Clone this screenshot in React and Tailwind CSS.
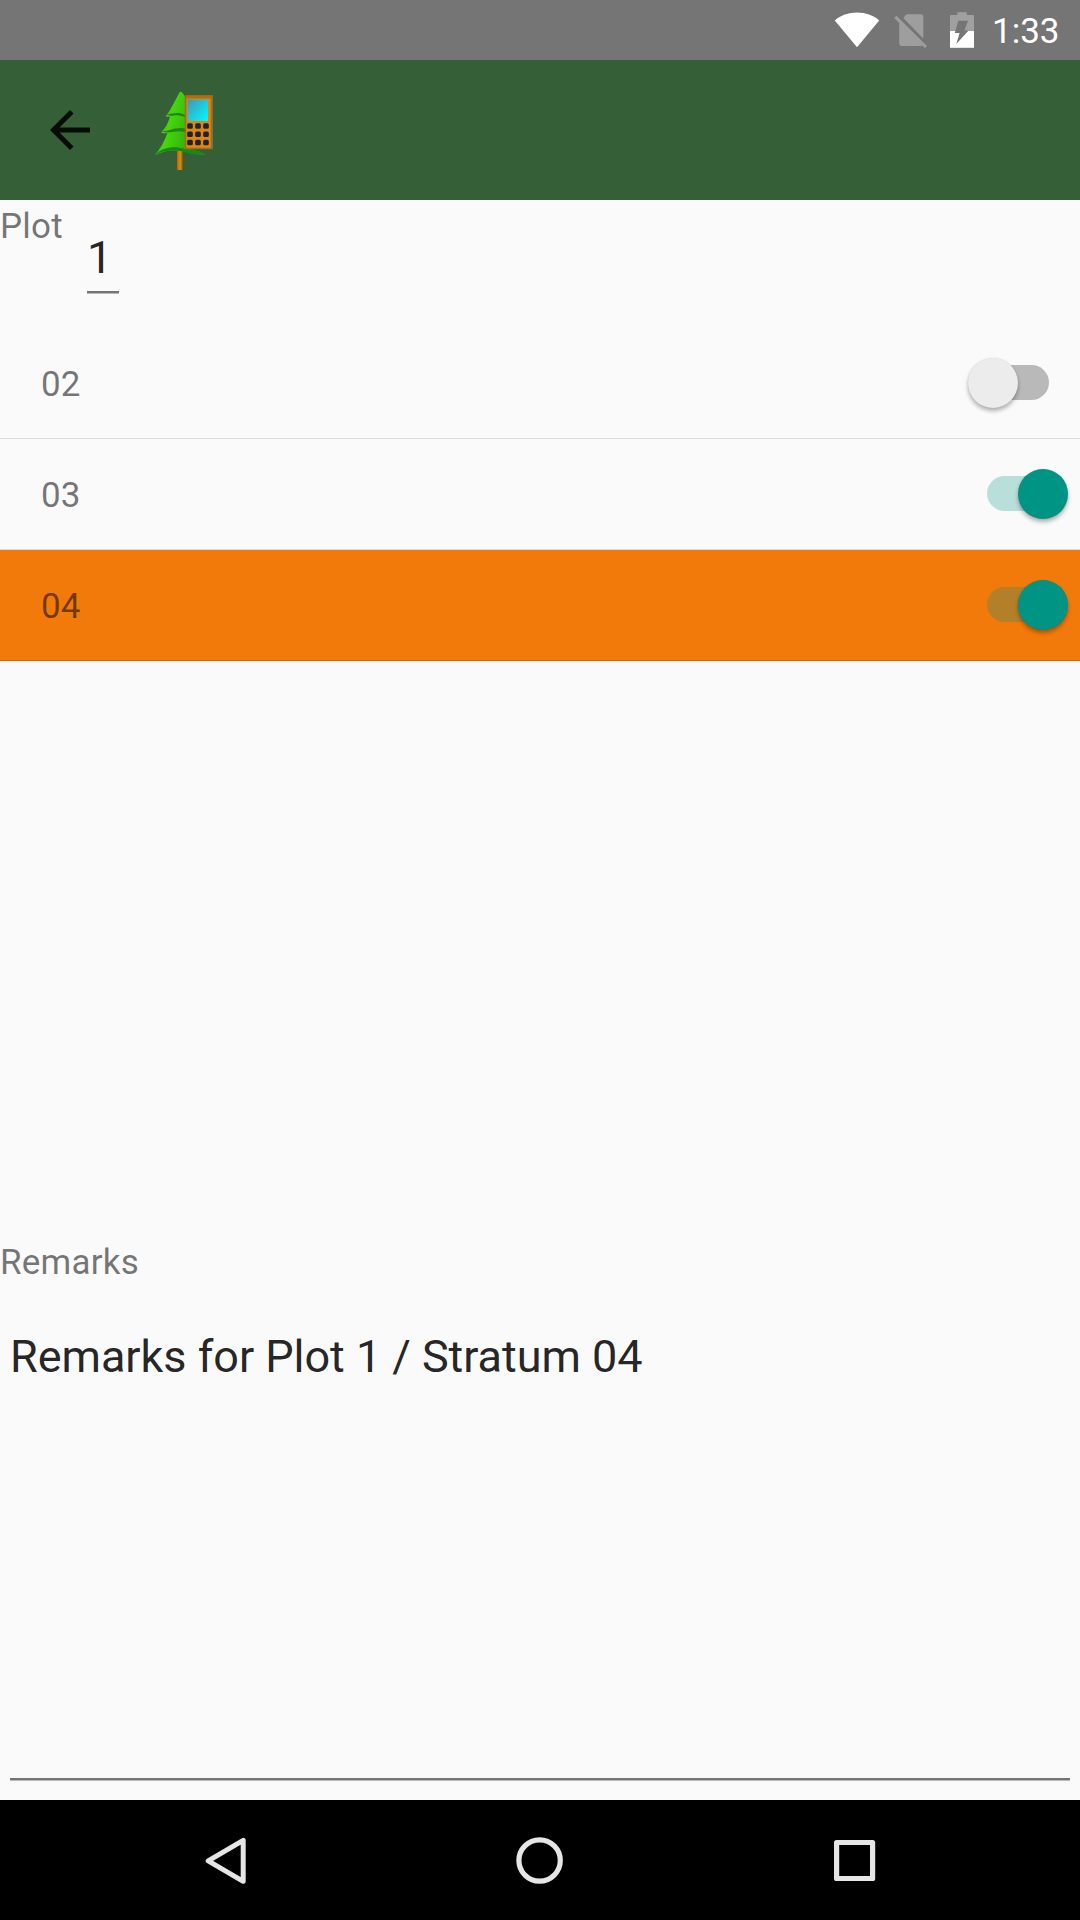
const strata = [
  { code: '02', on: false, selected: false },
  { code: '03', on: true, selected: false },
  { code: '04', on: true, selected: true },
];

function StatusBar() {
  return (
    <div className="flex h-[60px] shrink-0 bg-[#757575] pl-[834px] text-white">
      <svg className="h-[60px] w-[46px]" viewBox="0 0 46 60" fill="currentColor">
        <path d="M.8 20.4C6.5 15.3 14.500 12.500 23 12.500s16.500 2.800 22.200 7.900L23 47.300Z" />
      </svg>
      <svg className="ml-[11px] h-[60px] w-[37px]" viewBox="0 0 37 60" fill="#9e9e9e">
        <path d="M16.500 14.200H29.500a2.800 2.800 0 0 1 2.800 2.800V38.500L12.500 18.300l2-3a2.500 2.500 0 0 1 2-1.100Z" />
        <path d="M8.200 22.500 31.500 45.300a3 3 0 0 1-1.700.7H11.200a3 3 0 0 1-3-3Z" />
        <path d="M3.200 18 5.400 15.800 36 45.900 33.900 48.100Z" />
      </svg>
      <svg className="ml-[21px] h-[60px] w-[26px]" viewBox="0 0 26 60">
        <path d="M8.300 12.300h9.400V15H24a1 1 0 0 1 1 1v15H1V16a1 1 0 0 1 1-1h6.300Z" fill="#a0a0a0" />
        <path d="M1 31h24v16.800H1Z" fill="#fff" />
        <path d="M9.300 20.700H19l-3.600 9.800h4.200L7.300 44l3.300-11H5.800Z" fill="#757575" />
      </svg>
      <span className="ml-[17px] pt-[11px] text-[35px] leading-[42px]">1:33</span>
    </div>
  );
}

function TreePhoneLogo() {
  return (
    <svg className="ml-[50px] h-[84px] w-[66px] blur-[0.6px]" viewBox="150 88 66 84">
      <defs>
        <linearGradient id="leaf" x1="0" y1="0" x2="1" y2="0.3">
          <stop offset="0" stopColor="#2a9a0c" />
          <stop offset="0.4" stopColor="#46d60c" />
          <stop offset="1" stopColor="#2aa008" />
        </linearGradient>
        <linearGradient id="screen" x1="0" y1="0" x2="1" y2="1">
          <stop offset="0" stopColor="#4495b4" />
          <stop offset="1" stopColor="#00fbff" />
        </linearGradient>
        <linearGradient id="trunk" x1="0" y1="0" x2="1" y2="0">
          <stop offset="0" stopColor="#a86408" />
          <stop offset="0.5" stopColor="#dc920c" />
          <stop offset="1" stopColor="#5a4a14" />
        </linearGradient>
      </defs>
      <path d="M177 149h6.500v21H177Z" fill="url(#trunk)" />
      <path
        d="M180 91.500c2 0 4 3 5.500 6V149c8 .5 15 2 20 5.500-8 1-14-1-22-3-10-2-19-1-28.500 3.500 5-6 9-13 12.500-22-2 .5-4 .5-6.500-.5 4-4 7-9 9-16-1.500.5-3 .3-4.500 0 5-6 9-15 14.500-25Z"
        fill="url(#leaf)"
      />
      <path d="M166 114c7 0 12-3 19 1v2c-6-2-9-2-14-1Z" fill="#238510" />
      <path d="M161 131.500c9 0 14-5 24-3v3.500c-7-2-11 0-17 .5Z" fill="#238510" />
      <path d="M155 154.500c8-7 19-9 30-5.500 8 .5 15 2 20 5.500-8 1-14-1-22-3-10-2-19-1-28 3Z" fill="#178916" />
      <path d="M185.500 96h26v52.500h-26Z" fill="#e0850e" stroke="#a96918" strokeWidth="1.500" />
      <path d="M212.400 95v54" stroke="#7d7a4c" strokeWidth="0.900" />
      <path d="M186 95.500h25.500v3H186Z" fill="#b56b0c" />
      <path d="M187.500 99.500h20.500v21.500h-20.500Z" fill="url(#screen)" />
      <g fill="#1d2337">
        {[126, 134.3, 142.5].map((y) =>
          [190, 198, 206].map((x) => (
            <rect key={x + '-' + y} x={x - 2.8} y={y - 2.8} width="5.600" height="5.600" rx="1.500" />
          ))
        )}
      </g>
    </svg>
  );
}

function Toolbar() {
  return (
    <header className="flex h-[140px] shrink-0 items-center bg-[#355f36] pl-[40px]">
      <svg className="h-[60px] w-[60px]" viewBox="0 0 24 24" fillOpacity="0.87">
        <path d="M20 11H7.830l5.590-5.590L12 4l-8 8 8 8 1.410-1.410L7.830 13H20v-2z" />
      </svg>
      <TreePhoneLogo />
    </header>
  );
}

function Switch({ on }) {
  return (
    <div
      className={`mb-[1px] flex h-[35px] w-[62px] items-start rounded-full ${
        on ? 'justify-end bg-[#009485]/26' : 'bg-black/26'
      }`}
    >
      <div
        className={`-mt-[7px] size-[50px] shrink-0 rounded-full shadow-[0_3px_4px_rgba(0,0,0,0.3),0_0_1px_rgba(0,0,0,0.15)] ${
          on ? '-mr-[19px] bg-[#009485]' : '-ml-[19px] bg-[#ececec]'
        }`}
      />
    </div>
  );
}

function StratumRow({ code, on, selected }) {
  return (
    <li
      className={`flex h-[111px] items-center justify-between border-b border-black/12 pr-[31px] pl-[41px] ${
        selected ? 'bg-[#f27a0a]' : ''
      }`}
    >
      <span className="pt-[4px] text-[35px] leading-[42px] tracking-[0.2px] text-black/54">{code}</span>
      <Switch on={on} />
    </li>
  );
}

function Underline({ className }) {
  return <div className={`h-[3px] border-b border-[#b8b8b8] bg-[#757575] ${className}`} />;
}

function NavigationBar() {
  return (
    <nav className="flex h-[120px] shrink-0 items-center bg-black pl-[202px]">
      <svg className="h-[60px] w-[48px]" viewBox="0 0 48 60" fill="none" stroke="#e6e6e6" strokeWidth="5" strokeLinejoin="round">
        <path d="M41.200 10.300v41L6.200 30.800Z" />
      </svg>
      <svg className="ml-[259px] h-[60px] w-[60px]" viewBox="0 0 60 60" fill="none" stroke="#e6e6e6" strokeWidth="5.200">
        <circle cx="30.600" cy="30.500" r="20.700" />
      </svg>
      <svg className="ml-[255px] h-[60px] w-[60px]" viewBox="0 0 60 60" fill="none" stroke="#e6e6e6" strokeWidth="5.200" strokeLinejoin="round">
        <path d="M12.600 12.500h36v36h-36Z" />
      </svg>
    </nav>
  );
}

export default function App() {
  return (
    <div className="flex h-[1920px] w-[1080px] flex-col overflow-hidden bg-[#fafafa] font-['Roboto',sans-serif]">
      <StatusBar />
      <Toolbar />
      <section className="flex h-[128px] shrink-0">
        <label className="w-[87px] pt-[6px] text-[35px] leading-[42px] tracking-[0.2px] text-black/54">Plot</label>
        <div className="w-[32px] pt-[31px]">
          <div className="h-[60px] text-[45px] leading-[54px] text-black/87">1</div>
          <Underline className="w-[32px]" />
        </div>
      </section>
      <ul className="h-[913px] shrink-0">
        {strata.map((s) => (
          <StratumRow key={s.code} {...s} />
        ))}
      </ul>
      <section className="flex flex-1 flex-col pb-[19px]">
        <label className="pt-[1px] text-[35px] leading-[42px] tracking-[0.2px] text-black/54">Remarks</label>
        <div className="mt-[46px] flex-1 px-[10px] text-[45px] leading-[54px] tracking-[-0.04px] text-black/87">
          Remarks for Plot 1 / Stratum 04
        </div>
        <Underline className="mx-[10px]" />
      </section>
      <NavigationBar />
    </div>
  );
}
